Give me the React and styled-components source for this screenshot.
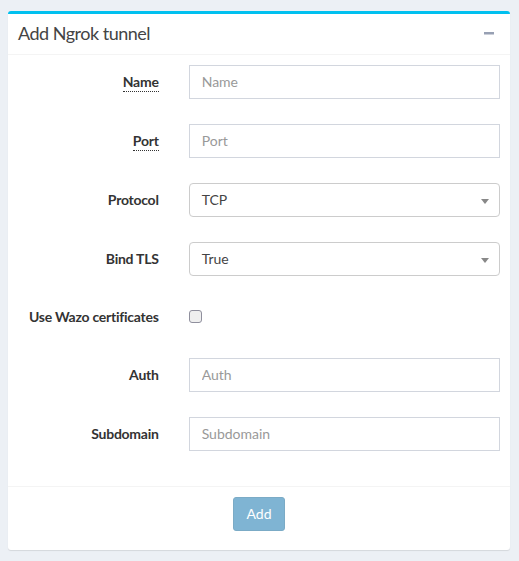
import React from "react";
import styled, { createGlobalStyle } from "styled-components";

const Global = createGlobalStyle`
  html, body { margin: 0; padding: 0; }
  body {
    background: #ecf0f5;
    font-family: Lato, "Open Sans", sans-serif;
    color: #333;
    font-size: 14px;
  }
  * { box-sizing: border-box; }
`;

const Page = styled.div`
  padding: 11px 9px 8px 8px;
`;

const Box = styled.section`
  background: #fff;
  border-top: 3px solid #00c0ef;
  border-radius: 3px;
  box-shadow: 0 1px 1px rgba(0, 0, 0, 0.1);
`;

const Header = styled.header`
  display: flex;
  align-items: center;
  justify-content: space-between;
  padding: 10px;
  border-bottom: 1px solid #f4f4f4;
`;

const Title = styled.h3`
  margin: 0;
  font-size: 18px;
  line-height: 1.1;
  font-weight: 400;
  letter-spacing: -0.5px;
  color: #444;
`;

const ToolButton = styled.button`
  border: none;
  background: transparent;
  padding: 0 6px;
  display: flex;
  align-items: center;
  cursor: pointer;
`;

const Body = styled.div`
  padding: 10px 10px 35px;
  display: flex;
  flex-direction: column;
  gap: 25px;
`;

const Row = styled.div`
  display: grid;
  grid-template-columns: calc((100% + 30px) / 3 - 30px) 1fr;
  column-gap: 30px;
  align-items: center;
  min-height: ${(p) => (p.$compact ? "32px" : "34px")};
`;

const Label = styled.label`
  justify-self: end;
  font-weight: 700;
  letter-spacing: -0.25px;
  color: #333;
  border-bottom: ${(p) => (p.$dotted ? "1px dotted #333" : "none")};
  line-height: ${(p) => (p.$dotted ? "19px" : "20px")};
  margin-top: ${(p) => (p.$dotted ? "1px" : "0")};
`;

const Input = styled.input`
  width: 100%;
  height: 34px;
  padding: 6px 12px;
  border: 1px solid #d2d6de;
  border-radius: 0;
  font-family: inherit;
  font-size: 14px;
  color: #555;
  &::placeholder { color: #999; }
`;

const Select = styled.div`
  position: relative;
  height: 34px;
  border: 1px solid #ccc;
  border-radius: 4px;
  display: flex;
  align-items: center;
  padding: 0 12px;
  color: #444;
`;

const Arrow = styled.span`
  position: absolute;
  right: 10px;
  top: 15px;
  border-style: solid;
  border-width: 5px 4px 0 4px;
  border-color: #888 transparent transparent transparent;
`;

const Check = styled.span`
  width: 13px;
  height: 13px;
  border: 1px solid #8f8f9d;
  border-radius: 3px;
  background: #efefef;
  display: block;
`;

const Footer = styled.footer`
  border-top: 1px solid #f4f4f4;
  padding: 10px 10px 19px;
  display: flex;
  justify-content: center;
`;

const Button = styled.button`
  height: 34px;
  padding: 6px 12px;
  background: #3c8dbc;
  border: 1px solid #367fa9;
  border-radius: 3px;
  color: #fff;
  font-family: inherit;
  font-size: 14px;
  opacity: 0.65;
`;

function Field({ label, dotted, placeholder }) {
  return (
    <Row>
      <Label $dotted={dotted}>{label}</Label>
      <Input placeholder={placeholder} />
    </Row>
  );
}

function SelectField({ label, value }) {
  return (
    <Row>
      <Label>{label}</Label>
      <Select>
        {value}
        <Arrow />
      </Select>
    </Row>
  );
}

export default function App() {
  return (
    <Page>
      <Global />
      <Box>
        <Header>
          <Title>Add Ngrok tunnel</Title>
          <ToolButton aria-label="collapse">
            <svg width="10" height="3" viewBox="0 0 10 3">
              <rect width="10" height="2.5" fill="#97a0b3" />
            </svg>
          </ToolButton>
        </Header>
        <Body>
          <Field label="Name" dotted placeholder="Name" />
          <Field label="Port" dotted placeholder="Port" />
          <SelectField label="Protocol" value="TCP" />
          <SelectField label="Bind TLS" value="True" />
          <Row $compact>
            <Label>Use Wazo certificates</Label>
            <Check />
          </Row>
          <Field label="Auth" placeholder="Auth" />
          <Field label="Subdomain" placeholder="Subdomain" />
        </Body>
        <Footer>
          <Button disabled>Add</Button>
        </Footer>
      </Box>
    </Page>
  );
}
